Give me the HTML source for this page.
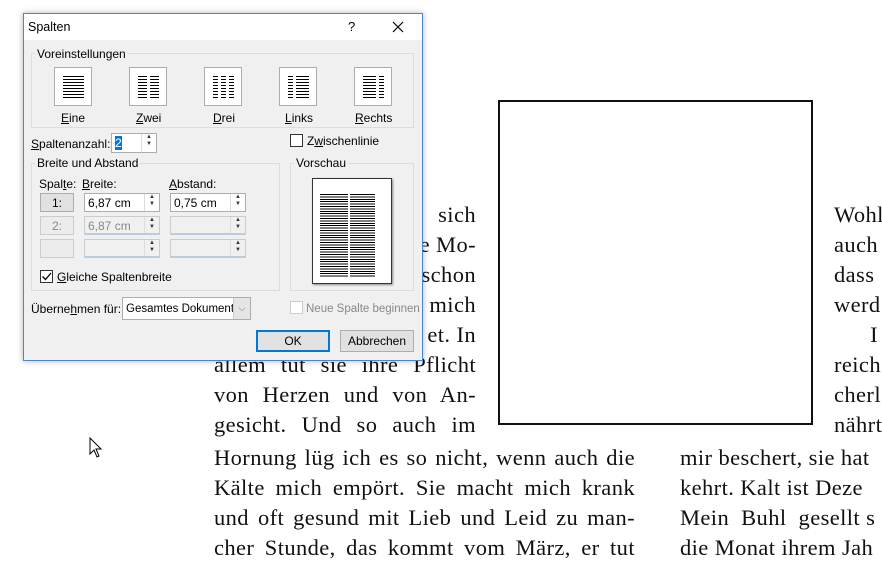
<!DOCTYPE html>
<html><head><meta charset="utf-8"><style>
*{margin:0;padding:0;box-sizing:border-box}
body{width:882px;height:563px;background:#fff;position:relative;overflow:hidden;font-family:"Liberation Sans",sans-serif}
.doc{position:absolute;font-family:"Liberation Serif",serif;font-size:22.5px;letter-spacing:0.4px;color:#111;white-space:nowrap;line-height:30px}
.j{text-align:justify;text-align-last:justify;white-space:nowrap;height:30px}
.a{position:absolute;font-size:12px;color:#000;white-space:nowrap;line-height:14px}
.g{color:#888}
.grp{position:absolute;border:1px solid #dcdcdc}
.ib{position:absolute;width:38px;height:39px;background:#fff;border:1px solid #adadad}
.st{position:absolute;background:repeating-linear-gradient(#000 0 1px,transparent 1px 3px)}
.inp{position:absolute;height:18px;background:#fff;border:1px solid #adadad}
.dis{background:#f0f0f0;border-color:#ccc;border-bottom:2px solid #bcd}
.sp{position:absolute;right:0;top:0;width:15px;height:100%;border-left:1px solid #ddd;font-size:6px;line-height:7px;text-align:center;color:#333}
.btn{position:absolute;background:#e1e1e1;border:1px solid #adadad;font-size:12px;text-align:center;line-height:18px}
.cb{position:absolute;width:13px;height:13px;background:#fff;border:1px solid #333}
u{text-decoration:underline}
</style></head><body>
<!-- document -->
<div style="position:absolute;left:498px;top:100px;width:315px;height:325px;border:2px solid #111"></div>
<div class="doc" style="left:214px;top:200px;width:262px">
<div style="text-align:right">sich</div>
<div style="text-align:right">e Mo-</div>
<div style="text-align:right">schon</div>
<div style="text-align:right">mich</div>
<div style="text-align:right">et. In</div>
<div class="j">allem tut sie ihre Pflicht</div>
<div class="j">von Herzen und von An-</div>
<div class="j">gesicht. Und so auch im</div>
</div>
<div class="doc" style="left:214px;top:443px;width:421px">
<div class="j">Hornung lüg ich es so nicht, wenn auch die</div>
<div class="j">Kälte mich empört. Sie macht mich krank</div>
<div class="j">und oft gesund mit Lieb und Leid zu man-</div>
<div class="j">cher Stunde, das kommt vom März, er tut</div>
</div>
<div class="doc" style="left:834px;top:200px">
<div>Wohl</div><div>auch</div><div>dass</div><div>werd</div><div>&nbsp; &nbsp; &nbsp; I</div><div>reich</div><div>cherl</div><div>nährt</div>
</div>
<div class="doc" style="left:680px;top:443px">
<div>mir beschert, sie hat</div><div>kehrt. Kalt ist Deze</div><div>Mein &nbsp;Buhl &nbsp;gesellt s</div><div>die Monat ihrem Jah</div>
</div>
<svg style="position:absolute;left:89px;top:437px" width="14" height="22" viewBox="0 0 14 22"><path d="M1 1 L1 17 L5 13 L8 20 L10 19 L7 12 L12 12 Z" fill="#fff" stroke="#000" stroke-width="1"/></svg>

<!-- dialog -->
<div style="position:absolute;left:23px;top:13px;width:400px;height:348px;background:#f0f0f0;border:1px solid #4a86c8;box-shadow:0 0 6px rgba(0,0,0,.3)">
<div style="position:absolute;left:0;top:0;width:398px;height:26px;background:#fff"></div>
</div>
<div class="a" style="left:28px;top:20px;font-size:12.5px">Spalten</div>
<div class="a" style="left:348px;top:20px;font-size:13px">?</div>
<svg style="position:absolute;left:392px;top:21px" width="12" height="12"><path d="M1 1L11 11M11 1L1 11" stroke="#000" stroke-width="1.2"/></svg>

<div class="grp" style="left:31px;top:53px;width:383px;height:75px"></div>
<div class="a" style="left:35px;top:47px;background:#f0f0f0;padding:0 2px">Voreinstellungen</div>

<div class="ib" style="left:54px;top:67px"><div class="st" style="left:8px;top:8px;width:21px;height:22px"></div></div>
<div class="ib" style="left:129px;top:67px"><div class="st" style="left:8px;top:8px;width:9px;height:22px"></div><div class="st" style="left:20px;top:8px;width:9px;height:22px"></div></div>
<div class="ib" style="left:204px;top:67px"><div class="st" style="left:8px;top:8px;width:5px;height:22px"></div><div class="st" style="left:16px;top:8px;width:5px;height:22px"></div><div class="st" style="left:24px;top:8px;width:5px;height:22px"></div></div>
<div class="ib" style="left:279px;top:67px"><div class="st" style="left:8px;top:8px;width:5px;height:22px"></div><div class="st" style="left:16px;top:8px;width:13px;height:22px"></div></div>
<div class="ib" style="left:354px;top:67px"><div class="st" style="left:8px;top:8px;width:13px;height:22px"></div><div class="st" style="left:24px;top:8px;width:5px;height:22px"></div></div>
<div class="a" style="left:61px;top:111px"><u>E</u>ine</div>
<div class="a" style="left:136px;top:111px"><u>Z</u>wei</div>
<div class="a" style="left:213px;top:111px"><u>D</u>rei</div>
<div class="a" style="left:285px;top:111px"><u>L</u>inks</div>
<div class="a" style="left:355px;top:111px"><u>R</u>echts</div>

<div class="a" style="left:31px;top:137px"><u>S</u>paltenanzahl:</div>
<div class="inp" style="left:111px;top:133px;width:46px;height:20px"><span style="position:absolute;left:3px;top:2px;font-size:12px;background:#0078d7;color:#fff;line-height:14px">2</span><div class="sp">▲<br>▼</div></div>
<div class="cb" style="left:290px;top:134px"></div>
<div class="a" style="left:307px;top:134px">Z<u>w</u>ischenlinie</div>

<div class="grp" style="left:31px;top:163px;width:249px;height:128px"></div>
<div class="a" style="left:35px;top:156px;background:#f0f0f0;padding:0 2px">Breite und Abstand</div>
<div class="grp" style="left:290px;top:163px;width:124px;height:128px"></div>
<div class="a" style="left:294px;top:156px;background:#f0f0f0;padding:0 2px">Vorschau</div>
<div style="position:absolute;left:312px;top:178px;width:80px;height:106px;background:#fff;border:1px solid #333;box-shadow:1px 1px 2px #888">
<div style="position:absolute;left:7px;top:15px;width:28px;height:84px;background:repeating-linear-gradient(#000 0 1px,transparent 1px 2.4px)"></div>
<div style="position:absolute;left:37px;top:15px;width:25px;height:84px;background:repeating-linear-gradient(#000 0 1px,transparent 1px 2.4px)"></div>
</div>

<div class="a" style="left:39px;top:177px">Spal<u>t</u>e:</div>
<div class="a" style="left:82px;top:177px"><u>B</u>reite:</div>
<div class="a" style="left:169px;top:177px"><u>A</u>bstand:</div>
<div class="btn" style="left:40px;top:193px;width:34px;height:19px">1:</div>
<div class="btn g" style="left:40px;top:216px;width:34px;height:19px;border-color:#ccc;background:#ececec">2:</div>
<div class="btn" style="left:40px;top:239px;width:34px;height:19px;border-color:#ccc;background:#ececec"></div>
<div class="inp" style="left:84px;top:193px;width:76px;height:19px"><span class="a" style="left:3px;top:2px">6,87 cm</span><div class="sp">▲<br>▼</div></div>
<div class="inp" style="left:170px;top:193px;width:76px;height:19px"><span class="a" style="left:3px;top:2px">0,75 cm</span><div class="sp">▲<br>▼</div></div>
<div class="inp dis" style="left:84px;top:216px;width:76px;height:19px"><span class="a g" style="left:3px;top:2px">6,87 cm</span><div class="sp g">▲<br>▼</div></div>
<div class="inp dis" style="left:170px;top:216px;width:76px;height:19px"><div class="sp g">▲<br>▼</div></div>
<div class="inp dis" style="left:84px;top:239px;width:76px;height:19px"><div class="sp g">▲<br>▼</div></div>
<div class="inp dis" style="left:170px;top:239px;width:76px;height:19px"><div class="sp g">▲<br>▼</div></div>
<div class="cb" style="left:40px;top:270px"><svg width="11" height="11" style="position:absolute;left:0;top:0"><path d="M1.5 5.5L4.5 8.5L10 2" stroke="#000" stroke-width="1.3" fill="none"/></svg></div>
<div class="a" style="left:57px;top:270px"><u>G</u>leiche Spaltenbreite</div>

<div class="a" style="left:31px;top:302px">Überne<u>h</u>men für:</div>
<div style="position:absolute;left:122px;top:297px;width:129px;height:23px;background:#fff;border:1px solid #adadad"><span class="a" style="left:3px;top:4px;font-size:11.5px">Gesamtes Dokument</span><div style="position:absolute;right:0;top:0;width:17px;height:21px;background:#e5e5e5;border-left:1px solid #ccc;font-size:9px;color:#666;text-align:center;line-height:21px">⌵</div></div>
<div class="cb" style="left:290px;top:301px;border-color:#ccc"></div>
<div class="a g" style="left:306px;top:302px;font-size:11.5px">Neue Spalte beginnen</div>

<div class="btn" style="left:256px;top:330px;width:74px;height:22px;border:2px solid #0078d7;line-height:18px">OK</div>
<div class="btn" style="left:340px;top:330px;width:74px;height:22px;line-height:20px">Abbrechen</div>
</body></html>
